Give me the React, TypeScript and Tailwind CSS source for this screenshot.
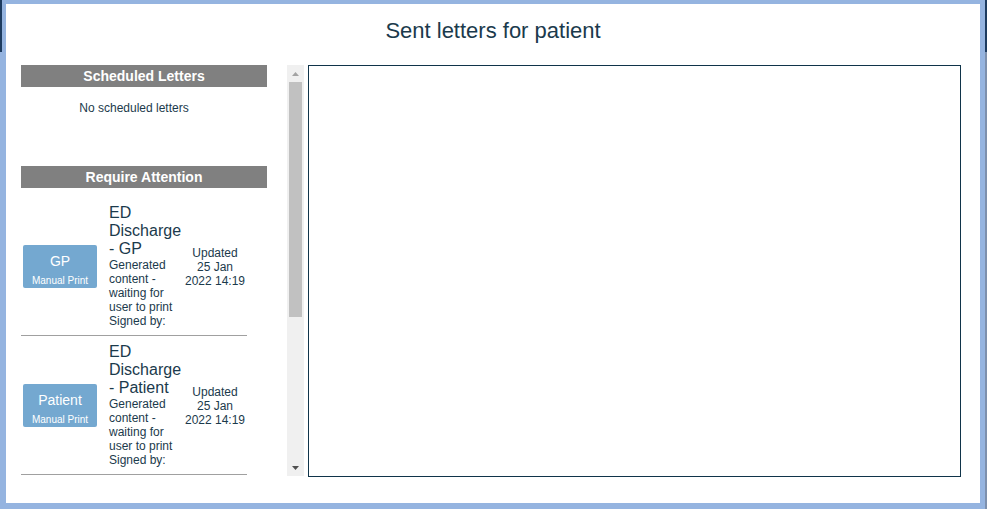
import React from "react";

const FONT = { fontFamily: '"Liberation Sans", Arial, sans-serif' };

function Item({ label, title, first }: { label: string; title: string; first?: boolean }) {
  return (
    <div className={`flex w-[226px] items-center border-b border-[#a0a0a0] py-[7px] ${first ? "mt-[9px]" : ""}`}>
      <div className="ml-[2px] flex h-[43px] w-[74px] shrink-0 flex-col items-center rounded-[2px] bg-[#74a8d0] pt-[8px] text-white">
        <div className="text-[14px] leading-[16px]">{label}</div>
        <div className="mt-[6px] text-[10px] leading-[12px]">Manual Print</div>
      </div>
      <div className="ml-[12px] w-[74px] shrink-0 text-[#1b3a4c]">
        <div className="text-[16px] leading-[18px]">{title}</div>
        <div className="text-[12px] leading-[14px]">Generated content - waiting for user to print</div>
        <div className="text-[12px] leading-[14px]">Signed by:</div>
      </div>
      <div className="flex-1 pt-[2px] text-center text-[12px] leading-[14px] text-[#1b3a4c]">
        Updated
        <br />
        25 Jan
        <br />
        2022 14:19
      </div>
    </div>
  );
}

export default function App() {
  return (
    <div className="relative h-[509px] w-[987px] overflow-hidden bg-[#95b4e0]" style={FONT}>
      <div className="absolute left-0 top-0 h-[52px] w-[2px] bg-[#1d3b5f]" />
      <div className="absolute right-0 top-0 h-[52px] w-[2px] bg-[#1d3b5f]" />
      <div className="absolute right-0 top-[52px] h-[457px] w-[2px] bg-[#7d90ad]" />
      <div className="ml-[6px] mt-[4px] flex h-[499px] w-[974px] flex-col bg-white">
        <div className="pt-[14px] text-center text-[22px] leading-[26px] text-[#1b3a4c]">Sent letters for patient</div>
        <div className="mt-[21px] flex pl-[15px]">
          <div className="flex h-[411px] w-[283px]">
            <div className="w-[266px]">
              <div className="flex h-[22px] w-[246px] items-center justify-center bg-[#808080] text-[14px] font-bold text-white">
                Scheduled Letters
              </div>
              <div className="mt-[14px] w-[226px] text-center text-[12px] leading-[14px] text-[#1b3a4c]">
                No scheduled letters
              </div>
              <div className="mt-[51px] flex h-[22px] w-[246px] items-center justify-center bg-[#808080] text-[14px] font-bold text-white">
                Require Attention
              </div>
              <Item label="GP" title="ED Discharge - GP" first />
              <Item label="Patient" title="ED Discharge - Patient" />
            </div>
            <div className="flex h-[411px] w-[17px] flex-col items-center bg-[#f0f0f0]">
              <div className="flex h-[17px] w-full items-center justify-center">
                <svg width="7" height="4" viewBox="0 0 7 4">
                  <polygon points="3.5,0 7,4 0,4" fill="#a3a3a3" />
                </svg>
              </div>
              <div className="h-[235px] w-[13px] bg-[#c1c1c1]" />
              <div className="flex-1" />
              <div className="flex h-[17px] w-full items-center justify-center">
                <svg width="7" height="4" viewBox="0 0 7 4">
                  <polygon points="0,0 7,0 3.5,4" fill="#505050" />
                </svg>
              </div>
            </div>
          </div>
          <div className="ml-[4px] h-[412px] w-[653px] border border-[#10344a]" />
        </div>
      </div>
    </div>
  );
}
